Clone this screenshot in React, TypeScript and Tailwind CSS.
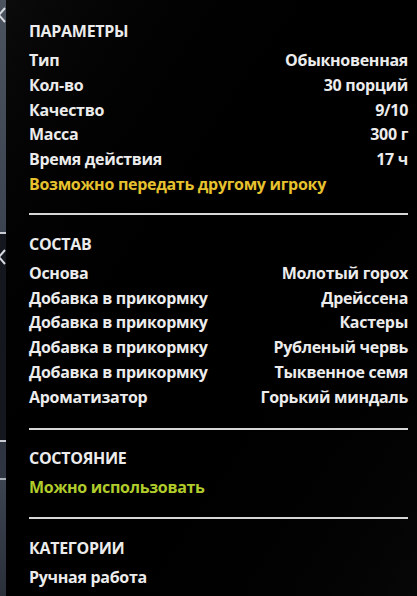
import React from 'react';

type Row = { label: string; value?: string; tone?: 'yellow' | 'green' };

const sections: { title: string; rows: Row[]; pad: string }[] = [
  {
    title: 'ПАРАМЕТРЫ',
    pad: 'pt-[16px] pb-[16px]',
    rows: [
      { label: 'Тип', value: 'Обыкновенная' },
      { label: 'Кол-во', value: '30 порций' },
      { label: 'Качество', value: '9/10' },
      { label: 'Масса', value: '300 г' },
      { label: 'Время действия', value: '17 ч' },
      { label: 'Возможно передать другому игроку', tone: 'yellow' },
    ],
  },
  {
    title: 'СОСТАВ',
    pad: 'pt-[17px] pb-[18px]',
    rows: [
      { label: 'Основа', value: 'Молотый горох' },
      { label: 'Добавка в прикормку', value: 'Дрейссена' },
      { label: 'Добавка в прикормку', value: 'Кастеры' },
      { label: 'Добавка в прикормку', value: 'Рубленый червь' },
      { label: 'Добавка в прикормку', value: 'Тыквенное семя' },
      { label: 'Ароматизатор', value: 'Горький миндаль' },
    ],
  },
  {
    title: 'СОСТОЯНИЕ',
    pad: 'pt-[16px] pb-[18px]',
    rows: [{ label: 'Можно использовать', tone: 'green' }],
  },
  {
    title: 'КАТЕГОРИИ',
    pad: 'pt-[17px] pb-[16px]',
    rows: [{ label: 'Ручная работа' }],
  },
];

function Chevron() {
  return (
    <svg width="10" height="18" viewBox="0 0 10 18" className="-ml-[3px]">
      <path d="M8 2 L2 9 L8 16" fill="none" stroke="#d8dbe0" strokeWidth="2" />
    </svg>
  );
}

export default function App() {
  return (
    <div className="flex w-[417px] h-[596px] overflow-hidden bg-black text-[#ececec]"
      style={{ fontFamily: '"Open Sans", "Noto Sans", sans-serif' }}>
      {/* side strip of the window behind */}
      <div className="w-[6px] flex flex-col shrink-0">
        <div className="h-[232px] bg-gradient-to-b from-[#4b535f] to-[#3c4451] pt-[6px] overflow-hidden">
          <Chevron />
        </div>
        <div className="h-[2px] bg-[#c9ccd2]" />
        <div className="h-[206px] bg-[#14181e] pt-[14px] overflow-hidden">
          <Chevron />
        </div>
        <div className="h-[2px] bg-[#c9ccd2]" />
        <div className="h-[36px] bg-[#2e3540]" />
        <div className="h-[2px] bg-[#aab0b8]" />
        <div className="flex-1 bg-gradient-to-b from-[#3c4450] to-[#2a303a]" />
      </div>

      <div className="flex-1 pl-[23px] pr-[9px] pt-[3px] bg-gradient-to-br from-[#0b0b0b] via-black to-[#070707]">
        {sections.map((s, i) => (
          <div key={s.title}
            className={`${s.pad} ${i < sections.length - 1 ? 'border-b-2 border-[#d6d6d6]' : ''}`}>
            <div className="text-[16px] font-bold leading-[24px] mb-[5px] tracking-[-0.3px]">{s.title}</div>
            {s.rows.map((r, j) => (
              <div key={j} className="flex justify-between text-[16px] font-bold leading-[24.8px] tracking-[-0.3px]">
                <span className={r.tone === 'yellow' ? 'text-[#e6c22e]' : r.tone === 'green' ? 'text-[#b2cc2c]' : ''}>
                  {r.label}
                </span>
                {r.value && <span>{r.value}</span>}
              </div>
            ))}
          </div>
        ))}
      </div>
    </div>
  );
}
